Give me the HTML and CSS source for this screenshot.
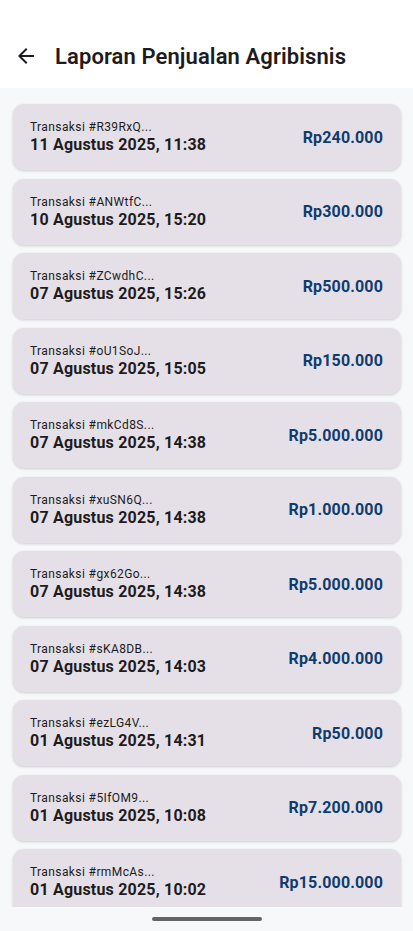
FILE: index.html
```html
<!DOCTYPE html>
<html lang="id">
<head>
<meta charset="utf-8">
<title>Laporan Penjualan Agribisnis</title>
<link rel="stylesheet" href="styles.css">
</head>
<body>
<div class="app">
  <header class="topbar">
    <svg class="back" viewBox="0 0 24 24" width="24" height="24"><path d="M20 11H7.83l5.59-5.59L12 4l-8 8 8 8 1.41-1.41L7.83 13H20v-2z" fill="#1d1b20"/></svg>
    <h1 class="title">Laporan Penjualan Agribisnis</h1>
  </header>
  <main class="content">
    <div class="list">
      <div class="card"><div class="info"><div class="tx">Transaksi #R39RxQ...</div><div class="date">11 Agustus 2025, 11:38</div></div><div class="amount">Rp240.000</div></div>
      <div class="card"><div class="info"><div class="tx">Transaksi #ANWtfC...</div><div class="date">10 Agustus 2025, 15:20</div></div><div class="amount">Rp300.000</div></div>
      <div class="card"><div class="info"><div class="tx">Transaksi #ZCwdhC...</div><div class="date">07 Agustus 2025, 15:26</div></div><div class="amount">Rp500.000</div></div>
      <div class="card"><div class="info"><div class="tx">Transaksi #oU1SoJ...</div><div class="date">07 Agustus 2025, 15:05</div></div><div class="amount">Rp150.000</div></div>
      <div class="card"><div class="info"><div class="tx">Transaksi #mkCd8S...</div><div class="date">07 Agustus 2025, 14:38</div></div><div class="amount">Rp5.000.000</div></div>
      <div class="card"><div class="info"><div class="tx">Transaksi #xuSN6Q...</div><div class="date">07 Agustus 2025, 14:38</div></div><div class="amount">Rp1.000.000</div></div>
      <div class="card"><div class="info"><div class="tx">Transaksi #gx62Go...</div><div class="date">07 Agustus 2025, 14:38</div></div><div class="amount">Rp5.000.000</div></div>
      <div class="card"><div class="info"><div class="tx">Transaksi #sKA8DB...</div><div class="date">07 Agustus 2025, 14:03</div></div><div class="amount">Rp4.000.000</div></div>
      <div class="card"><div class="info"><div class="tx">Transaksi #ezLG4V...</div><div class="date">01 Agustus 2025, 14:31</div></div><div class="amount">Rp50.000</div></div>
      <div class="card"><div class="info"><div class="tx">Transaksi #5IfOM9...</div><div class="date">01 Agustus 2025, 10:08</div></div><div class="amount">Rp7.200.000</div></div>
      <div class="card"><div class="info"><div class="tx">Transaksi #rmMcAs...</div><div class="date">01 Agustus 2025, 10:02</div></div><div class="amount">Rp15.000.000</div></div>
    </div>
  </main>
  <footer class="navbar"><div class="handle"></div></footer>
</div>
</body>
</html>
```
FILE: styles.css
```css
* { box-sizing: border-box; margin: 0; padding: 0; }
html, body { width: 413px; height: 931px; overflow: hidden; }
body { font-family: Roboto, "Noto Sans", sans-serif; background: #f7f8fa; color: #1d1b20; }
.app { display: flex; flex-direction: column; height: 931px; }
.topbar { height: 88px; background: #ffffff; display: flex; align-items: center; padding: 24px 0 0 14px; gap: 17px; flex-shrink: 0; }
.back { display: block; }
.title { font-size: 22px; font-weight: 600; letter-spacing: 0.1px; color: #1d1b20; }
.content { flex: 1; overflow: hidden; background: #f7f8fa; }
.list { display: flex; flex-direction: column; gap: 8.5px; padding: 16px 12px 0 13px; }
.card { height: 66px; flex-shrink: 0; background: #e5e0e7; border-radius: 11px; display: flex; align-items: center; justify-content: space-between; padding: 0 18px 0 17px; box-shadow: 0 1px 3px rgba(0,0,0,0.18); }
.info { display: flex; flex-direction: column; }
.tx { font-size: 12px; line-height: 16px; letter-spacing: 0.4px; color: #1d1b20; }
.date { font-size: 16px; line-height: 20px; font-weight: 700; letter-spacing: 0.2px; color: #1d1b20; }
.amount { font-size: 16px; font-weight: 700; letter-spacing: 0.15px; color: #0d3c6e; }
.navbar { height: 24px; flex-shrink: 0; background: #f7f8fa; display: flex; justify-content: center; align-items: center; }
.handle { width: 110px; height: 4px; border-radius: 2px; background: #646464; }
```
